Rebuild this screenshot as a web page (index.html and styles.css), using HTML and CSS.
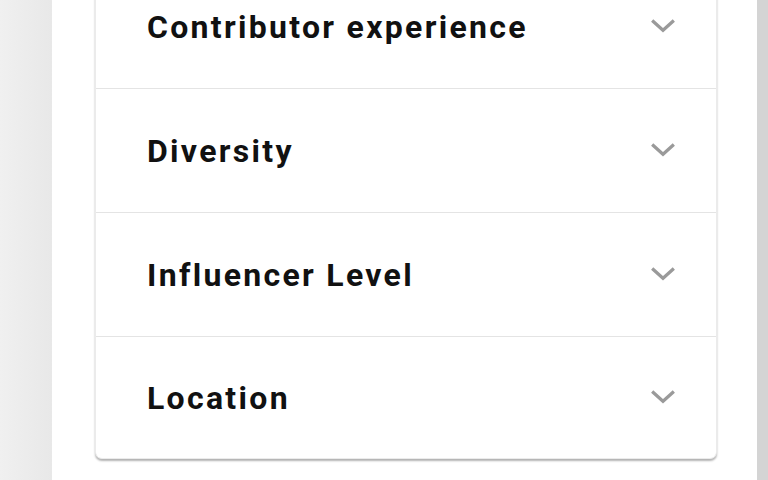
FILE: index.html
```html
<!DOCTYPE html>
<html lang="en">
<head>
    <meta charset="UTF-8">
    <meta name="viewport" content="width=device-width, initial-scale=1.0">
    <title>Filters</title>
    <link rel="stylesheet" href="styles.css">
</head>
<body>
    <div class="side"></div>

    <main class="content">
        <!-- Filter accordion -->
        <div class="accordion">
            <div class="acc-row">
                <span class="acc-title">Contributor experience</span>
                <svg class="chev" viewBox="0 0 24 24"><path d="M2 6l10 9 10-9"/></svg>
            </div>
            <div class="acc-row">
                <span class="acc-title">Diversity</span>
                <svg class="chev" viewBox="0 0 24 24"><path d="M2 6l10 9 10-9"/></svg>
            </div>
            <div class="acc-row">
                <span class="acc-title">Influencer Level</span>
                <svg class="chev" viewBox="0 0 24 24"><path d="M2 6l10 9 10-9"/></svg>
            </div>
            <div class="acc-row">
                <span class="acc-title">Location</span>
                <svg class="chev" viewBox="0 0 24 24"><path d="M2 6l10 9 10-9"/></svg>
            </div>
        </div>
    </main>

    <div class="scroll"></div>
</body>
</html>
```
FILE: styles.css
```css
html, body {
    margin: 0;
    height: 100%;
}
body {
    display: flex;
    font-family: Roboto, "Liberation Sans", sans-serif;
    background-color: #fff;
    overflow: hidden;
}
.side {
    width: 52px;
    flex-shrink: 0;
    background: linear-gradient(to right, #f0f0f0, #e8e8e8);
}
.content {
    flex: 1;
    padding-left: 43px;
}
.scroll {
    width: 11px;
    flex-shrink: 0;
    background-color: #d4d4d4;
}
.accordion {
    width: 620px;
    margin-top: -35px;
    background-color: #fff;
    border: 1px solid #ebebeb;
    border-top: none;
    border-radius: 0 0 7px 7px;
    box-shadow: 0 2px 2px rgba(0, 0, 0, 0.3);
}
.acc-row {
    height: 123px;
    display: flex;
    align-items: center;
    justify-content: space-between;
    padding: 0 40px 0 51px;
    border-bottom: 1px solid #e4e4e4;
}
.acc-row:last-child {
    height: 121px;
    border-bottom: none;
}
.acc-title {
    font-size: 32px;
    font-weight: 700;
    color: #111;
    letter-spacing: 2.3px;
}
.chev {
    width: 26px;
    height: 26px;
    fill: none;
    stroke: #9a9a9a;
    stroke-width: 3;
}
```
